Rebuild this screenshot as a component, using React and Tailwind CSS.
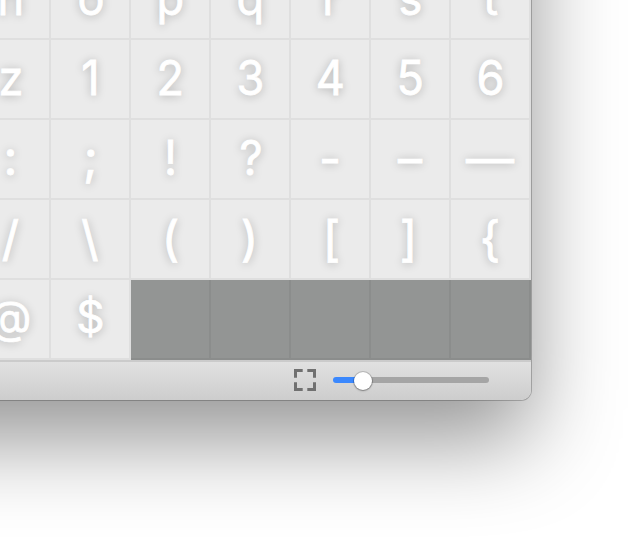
const rows = [
  ["n", "o", "p", "q", "r", "s", "t"],
  ["z", "1", "2", "3", "4", "5", "6"],
  [":", ";", "!", "?", "-", "–", "—"],
  ["/", "\\", "(", ")", "[", "]", "{"],
  ["@", "$", "", "", "", "", ""],
];

const shapes = {
  "-": "",
  "–": "",
  "—": "",
  ":": "translate-x-[0.5px] -translate-y-px",
  ";": "translate-x-[0.5px] -translate-y-px",
  "/": "translate-x-[0.5px]",
  "\\": "",
  "(": "translate-x-[0.5px]",
  ")": "-translate-x-[0.5px]",
  "[": "translate-x-[1.5px]",
  "]": "-translate-x-[1.5px]",
  "{": "",
  "@": "scale-x-[0.92] scale-y-[0.93] -translate-y-[1.5px]",
  "$": "scale-x-[0.92] scale-y-[0.93] -translate-y-[1.5px]",
};

function Glyph({ char }) {
  if (!char) {
    return <div className="h-20 w-20 border-r-2 border-b-2 border-[#8b8d8c] bg-[#939594]" />;
  }
  return (
    <div className="flex h-20 w-20 items-center justify-center border-r-2 border-b-2 border-[#dfdfdf] bg-[#ebebeb] text-[48px] leading-none font-normal text-white [-webkit-text-stroke:0.8px_white] [text-shadow:0_1px_10px_rgba(0,0,0,0.28)]">
      <span className={shapes[char] ?? "translate-x-[0.7px] -translate-y-px scale-x-[0.94] scale-y-[0.99]"}>{char}</span>
    </div>
  );
}

function FullscreenIcon() {
  return (
    <svg className="h-[22px] w-[22px]" viewBox="0 0 22 22" fill="none" stroke="#707070" strokeWidth="3">
      <path d="M1.5 8.7V1.5H8.7M13.3 1.5h7.2v7.2M20.5 13.3v7.2h-7.2M8.7 20.5H1.5v-7.2" />
    </svg>
  );
}

function SizeSlider() {
  return (
    <div className="flex h-5 w-[156px] items-center">
      <div className="h-1.5 w-[22px] rounded-l-full bg-[#3b88fd]" />
      <div className="z-10 -mr-2 -ml-px mt-0.5 h-[18px] w-[18px] shrink-0 rounded-full bg-white shadow-[0_0_0_1px_rgba(0,0,0,0.16),0_1px_2px_rgba(0,0,0,0.3)]" />
      <div className="h-1.5 flex-1 rounded-r-full bg-[#a5a5a5]" />
    </div>
  );
}

export default function App() {
  return (
    <div className="h-[548px] w-[643px] overflow-hidden bg-white font-['Inter','Liberation_Sans',sans-serif]">
      <div className="-mt-[240px] -ml-[329px] w-[860px] overflow-visible rounded-b-[10px] bg-[#ebebeb] pt-[200px] shadow-[0_0_0_1px_rgba(0,0,0,0.22),0_40px_88px_rgba(0,0,0,0.42)]">
        <div className="ml-[300px] grid w-[560px] grid-cols-7">
          {rows.flat().map((char, i) => (
            <Glyph key={i} char={char} />
          ))}
        </div>
        <div className="flex h-10 items-center justify-end gap-[17px] rounded-b-[10px] border-t-2 border-[#cbcbcb] bg-linear-to-b from-[#e1e1e1] to-[#cdcdcd] pr-[42px] pb-0.5">
          <FullscreenIcon />
          <SizeSlider />
        </div>
      </div>
    </div>
  );
}
